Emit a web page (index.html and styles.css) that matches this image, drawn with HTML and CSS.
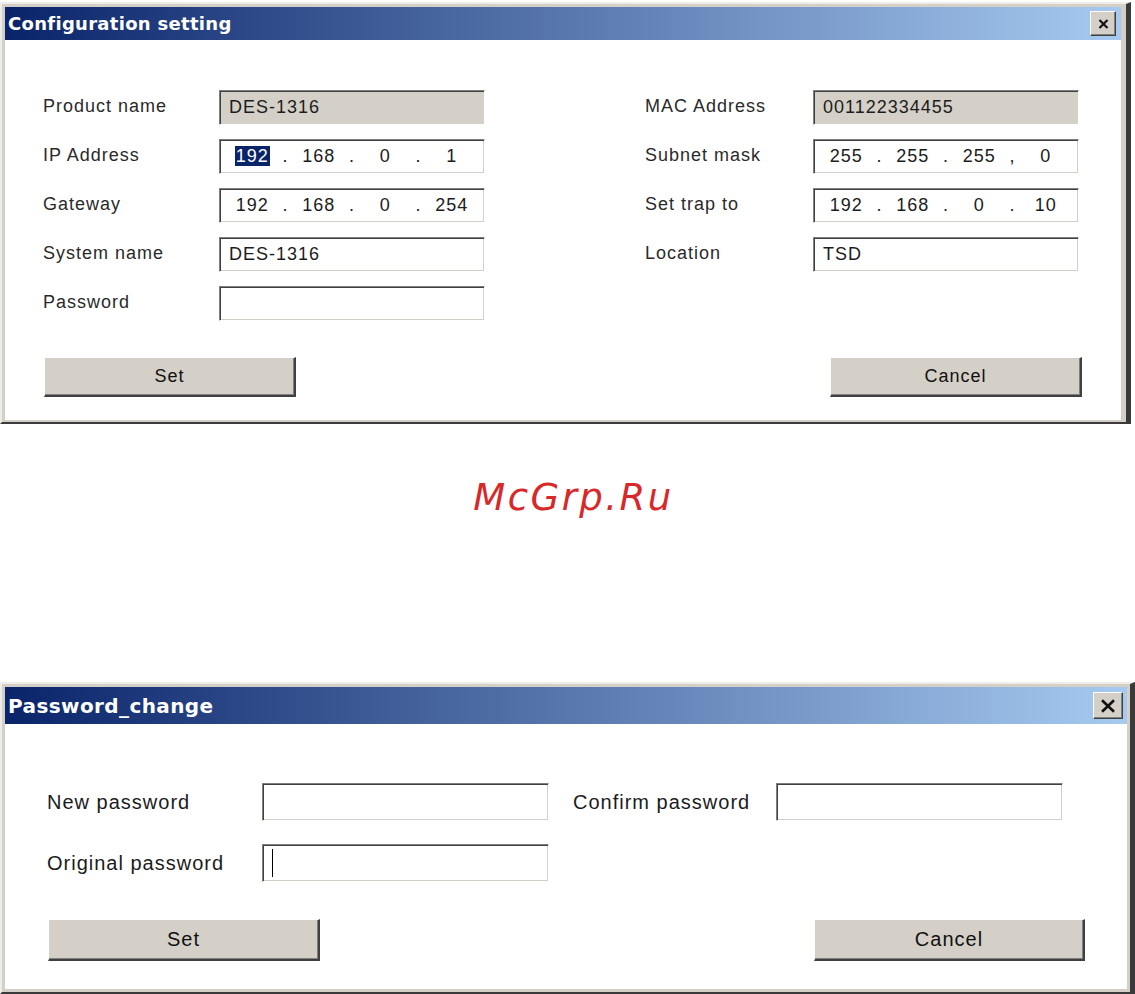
FILE: index.html
```html
<!DOCTYPE html>
<html>
<head>
  <meta charset="UTF-8">
  <title>Configuration setting</title>
  <link rel="stylesheet" href="styles.css">
</head>

<body>

  <div class="window config">
    <div class="titlebar">
      <span class="title">Configuration setting</span>
      <span class="close">
        <svg width="11" height="10" viewBox="0 0 11 10"><path d="M1.5 1 L9.5 9 M9.5 1 L1.5 9" stroke="#111" stroke-width="2.2" fill="none"/></svg>
      </span>
    </div>
    <div class="panel">
      <div class="form">
        <span class="lbl">Product name</span>
        <div class="field readonly">DES-1316</div>
        <span class="lbl col4">MAC Address</span>
        <div class="field readonly">001122334455</div>

        <span class="lbl">IP Address</span>
        <div class="field ip">
          <span class="seg"><span class="sel">192</span></span><span class="dot">.</span>
          <span class="seg">168</span><span class="dot">.</span>
          <span class="seg">0</span><span class="dot">.</span>
          <span class="seg">1</span>
        </div>
        <span class="lbl col4">Subnet mask</span>
        <div class="field ip">
          <span class="seg">255</span><span class="dot">.</span>
          <span class="seg">255</span><span class="dot">.</span>
          <span class="seg">255</span><span class="dot">,</span>
          <span class="seg">0</span>
        </div>

        <span class="lbl">Gateway</span>
        <div class="field ip">
          <span class="seg">192</span><span class="dot">.</span>
          <span class="seg">168</span><span class="dot">.</span>
          <span class="seg">0</span><span class="dot">.</span>
          <span class="seg">254</span>
        </div>
        <span class="lbl col4">Set trap to</span>
        <div class="field ip">
          <span class="seg">192</span><span class="dot">.</span>
          <span class="seg">168</span><span class="dot">.</span>
          <span class="seg">0</span><span class="dot">.</span>
          <span class="seg">10</span>
        </div>

        <span class="lbl">System name</span>
        <div class="field">DES-1316</div>
        <span class="lbl col4">Location</span>
        <div class="field">TSD</div>

        <span class="lbl">Password</span>
        <div class="field"></div>
      </div>
      <div class="actions">
        <button class="btn">Set</button>
        <button class="btn">Cancel</button>
      </div>
    </div>
  </div>

  <div class="watermark">McGrp.Ru</div>

  <div class="window pwd">
    <div class="titlebar">
      <span class="title">Password_change</span>
      <span class="close">
        <svg width="16" height="14" viewBox="0 0 16 14"><path d="M2 1.2 L14 12.8 M14 1.2 L2 12.8" stroke="#111" stroke-width="2.6" fill="none"/></svg>
      </span>
    </div>
    <div class="panel">
      <div class="form">
        <span class="lbl">New password</span>
        <div class="field"></div>
        <span class="lbl col4">Confirm password</span>
        <div class="field"></div>

        <span class="lbl">Original password</span>
        <div class="field"><span class="caret"></span></div>
      </div>
      <div class="actions">
        <button class="btn set">Set</button>
        <button class="btn cancel">Cancel</button>
      </div>
    </div>
  </div>

</body>
</html>
```

FILE: styles.css
```css
html, body {
  margin: 0;
  padding: 0;
  height: 100%;
  overflow: hidden;
  background: #fff;
}
body {
  font-family: "Liberation Sans", Arial, sans-serif;
  color: #1c1c1c;
}

/* window frame */
.window {
  box-sizing: border-box;
  background: #d4d0c8;
  border-style: solid;
  border-color: #efede8 #3a3a3a #3a3a3a #efede8;
}
.config {
  width: 1131px;
  margin-top: 2px;
  border-width: 2px 5px 2px 2px;
  padding: 3px 5px 2px 3px;
}
.pwd {
  width: 1135px;
  margin-top: 166px;
  border-width: 2px 5px 2px 2px;
  padding: 3px 3px 3px 3px;
}

.titlebar {
  display: flex;
  align-items: center;
  justify-content: space-between;
  padding-left: 3px;
  background: linear-gradient(to right, #0a246a, #a6caf0);
}
.title {
  font-family: "DejaVu Sans", Verdana, sans-serif;
  font-weight: bold;
  color: #fff;
}
.config .titlebar {
  height: 33px;
  padding-right: 5px;
}
.config .title {
  font-size: 18px;
  letter-spacing: 0.3px;
}
.pwd .titlebar {
  height: 37px;
  padding-right: 4px;
}
.pwd .title {
  font-size: 20px;
  letter-spacing: 0.4px;
}

.close {
  box-sizing: border-box;
  display: flex;
  align-items: center;
  justify-content: center;
  background: #d4d0c8;
  border: 1px solid;
  border-color: #fff #404040 #404040 #fff;
  box-shadow: inset -1px -1px #808080;
}
.config .close {
  width: 26px;
  height: 25px;
}
.pwd .close {
  width: 30px;
  height: 27px;
}

.panel {
  background: #fff;
}
.config .panel {
  padding: 50px 39px 23px 38px;
}
.pwd .panel {
  padding: 59px 42px 28px 42px;
}

/* label / field grid */
.form {
  display: grid;
  letter-spacing: 1px;
}
.config .form {
  grid-template-columns: 176px 266px 160px 168px 266px;
  grid-auto-rows: 35px;
  row-gap: 14px;
  font-size: 18px;
}
.pwd .form {
  grid-template-columns: 215px 287px 24px 203px 287px;
  grid-auto-rows: 38px;
  row-gap: 23px;
  font-size: 20px;
  align-items: center;
}
.col4 {
  grid-column: 4;
}
.config .lbl {
  line-height: 32px;
  color: #2a2a2a;
}
.lbl {
  white-space: nowrap;
}

.field {
  box-sizing: border-box;
  height: 100%;
  display: flex;
  align-items: center;
  padding-left: 9px;
  background: #fff;
  border: 1px solid;
  border-color: #808080 #fff #fff #808080;
  box-shadow: inset 1px 1px #404040, inset -1px -1px #d4d0c8;
}
.field.readonly {
  background: #d4d0c8;
}
.field.ip {
  padding: 0 2px;
}
.seg {
  flex: 1;
  text-align: center;
}
.dot {
  width: 6px;
  text-align: center;
}
.sel {
  background: #0a246a;
  color: #fff;
  padding: 0 1px;
}
.caret {
  width: 1px;
  height: 28px;
  background: #000;
}

/* buttons */
.actions {
  display: flex;
  justify-content: space-between;
}
.btn {
  box-sizing: border-box;
  font-family: inherit;
  letter-spacing: 1px;
  color: #111;
  background: #d4d0c8;
  border-style: solid;
  border-width: 1px 2px 2px 1px;
  border-color: #fff #404040 #404040 #fff;
  box-shadow: inset -1px -1px #808080;
  padding: 0;
}
.config .actions {
  margin-top: 36px;
  padding-left: 1px;
}
.config .btn {
  width: 252px;
  height: 40px;
  font-size: 18px;
}
.pwd .actions {
  margin-top: 37px;
  padding-left: 1px;
}
.pwd .btn {
  height: 42px;
  font-size: 20px;
}
.pwd .set {
  width: 272px;
}
.pwd .cancel {
  width: 271px;
}

.watermark {
  padding-top: 55px;
  padding-left: 12px;
  height: 37px;
  line-height: 37px;
  text-align: center;
  font-family: "DejaVu Sans", Verdana, sans-serif;
  font-style: italic;
  font-size: 37px;
  letter-spacing: 2.5px;
  color: #d8282a;
}
```
